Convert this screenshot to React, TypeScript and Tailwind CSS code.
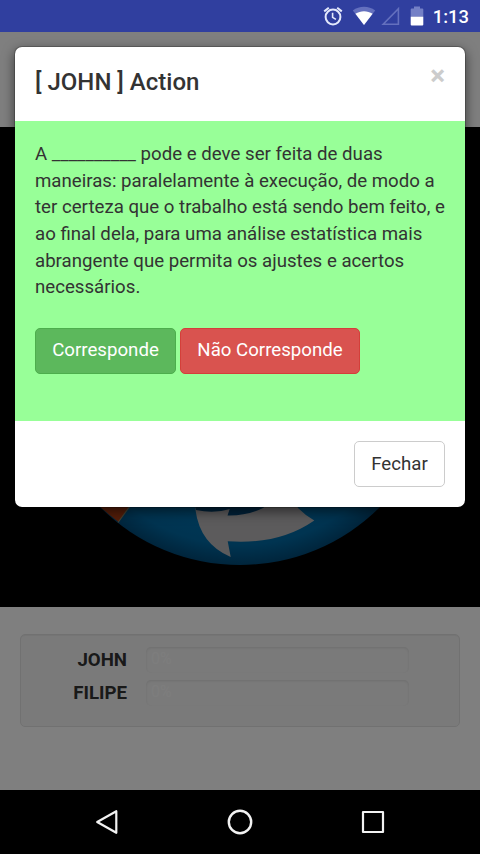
import { useState } from 'react';

const players = [
  { id: 1, name: 'JOHN', score: 0 },
  { id: 2, name: 'FILIPE', score: 0 },
];

const question =
  'A __________ pode e deve ser feita de duas maneiras: paralelamente à execução, de modo a ter certeza que o trabalho está sendo bem feito, e ao final dela, para uma análise estatística mais abrangente que permita os ajustes e acertos necessários.';

function StatusBar() {
  return (
    <header className="flex h-8 shrink-0 items-center justify-end bg-[#303f9f] pr-[11px] text-white">
      <svg width="20" height="20" viewBox="0 0 20 20" fill="none" stroke="#e3e8fb" className="mr-[9px]">
        <circle cx="10" cy="11" r="7.4" strokeWidth="2" />
        <path d="M1.2 5.4L5.8 1.7M18.8 5.4L14.2 1.7" strokeWidth="2" />
        <path d="M9.6 6.8v4.6l3.3 2" strokeWidth="1.6" />
      </svg>
      <svg width="24" height="20" viewBox="0 0 24 20" className="mr-[5px]">
        <path d="M.8 4.5C4 2.1 8 .8 12 .8s8 1.3 11.2 3.7L12 18.9z" fill="#6470be" />
        <path d="M3.4 7.8C6 6 9 5.2 12 5.2s6 .8 8.6 2.6L12 18.9z" fill="#fff" />
      </svg>
      <svg width="19" height="20" viewBox="0 0 19 20" fill="none" className="mr-[10px]">
        <path d="M2.2 18.2H17.4V2.6z" stroke="#6470be" strokeWidth="1.6" />
      </svg>
      <svg width="14" height="20" viewBox="0 0 14 20" className="mr-[9px]">
        <path d="M.7 10V3.4Q.7 2.4 1.7 2.4H4V.4H10V2.4H12.3Q13.3 2.4 13.3 3.4V10z" fill="#7480c6" />
        <path d="M.7 10.4H13.3V18.6Q13.3 19.6 12.3 19.6H1.7Q.7 19.6 .7 18.6z" fill="#fff" />
      </svg>
      <span className="pt-px text-[18.4px] leading-8 font-medium">1:13</span>
    </header>
  );
}

function Wheel() {
  return (
    <svg viewBox="0 0 480 480" className="block h-[480px] w-full">
      <defs>
        <radialGradient id="blue" gradientUnits="userSpaceOnUse" cx="240" cy="240" r="198">
          <stop offset="0.7" stopColor="#0072b0" />
          <stop offset="0.9" stopColor="#0068a2" />
          <stop offset="1" stopColor="#004a78" />
        </radialGradient>
      </defs>
      <circle cx="240" cy="240" r="198" fill="url(#blue)" />
      <path d="M98 378L130 378L118.5 395Q108 387 98 378z" fill="#a83a12" />
      <path d="M130 379L118 395.5" stroke="#8a8160" strokeWidth="1.2" />
      <path
        d="M195 360H290L298 381Q306 389 314.3 393.5Q279 418 227.7 414.3L230.7 430Q200 417 195.5 383z"
        fill="#b9b7b8"
      />
      <path d="M190 360H236L230 382Q214 387 196 383z" fill="#004272" />
      <path d="M236 360H290L263 381Q247 389 227.5 388.5L231 378z" fill="#004272" />
    </svg>
  );
}

function ScoreBoard() {
  return (
    <div className="mx-5 mt-[27px] h-[93px] rounded-[5px] border border-[#e3e3e3] bg-[#f5f5f5] pt-3 shadow-[inset_0_1px_1px_rgba(0,0,0,0.05)]">
      {players.map(p => (
        <div key={p.id} className="mb-[7px] flex h-[26px] items-center">
          <span className="w-[106px] text-right text-[18.67px] leading-[26px] font-bold text-[#333]">{p.name}</span>
          <div className="ml-[19px] h-[26px] w-[263px] overflow-hidden rounded-[5px] bg-[#f5f5f5] pl-[5px] text-[16px] leading-6 text-white/60 shadow-[inset_0_1px_3px_rgba(0,0,0,0.1)]">
            {p.score}%
          </div>
        </div>
      ))}
    </div>
  );
}

function ActionModal({ onClose }: { onClose: () => void }) {
  return (
    <div className="absolute inset-0 bg-black/50 px-[14px] pt-[14px]">
      <div className="flex h-[462px] flex-col overflow-hidden rounded-[8px] border border-black/20 bg-white bg-clip-padding text-[#333] shadow-[0_4px_12px_rgba(0,0,0,0.5)]">
        <div className="flex h-[74px] shrink-0 justify-between px-5">
          <h4 className="pt-[18px] text-[24px] leading-[34px] font-medium">[ JOHN ] Action</h4>
          <button className="mt-[15px] h-[28px] text-[28px] leading-[28px] font-bold text-[#ccc]" onClick={onClose}>
            ×
          </button>
        </div>
        <div className="h-[300px] shrink-0 bg-[#98ff98] px-5 pt-5 text-[18.67px] leading-[26.67px]">
          <p>{question}</p>
          <div className="mt-[27px] flex gap-1 text-white">
            <button className="h-[46px] w-[141px] rounded-[5px] border border-[#4cae4c] bg-[#5cb85c] pb-px">
              Corresponde
            </button>
            <button className="h-[46px] w-[180px] rounded-[5px] border border-[#d43f3a] bg-[#d9534f] pb-px">
              Não Corresponde
            </button>
          </div>
        </div>
        <div className="flex justify-end px-5 pt-5 text-[18.67px]">
          <button className="h-[46px] w-[91px] rounded-[5px] border border-[#ccc] bg-white" onClick={onClose}>
            Fechar
          </button>
        </div>
      </div>
    </div>
  );
}

function NavBar() {
  return (
    <nav className="flex h-16 shrink-0 items-center justify-between bg-black px-[94px]">
      <svg width="26" height="28" viewBox="0 0 26 28" fill="none" stroke="#f2f2f2" strokeWidth="2.2" strokeLinejoin="round">
        <path d="M22.3 3.2V24.8L3.2 14z" />
      </svg>
      <svg width="28" height="28" viewBox="0 0 28 28" fill="none" stroke="#f2f2f2" strokeWidth="2.4">
        <circle cx="14" cy="14" r="11.2" />
      </svg>
      <svg width="26" height="28" viewBox="0 0 26 28" fill="none" stroke="#f2f2f2" strokeWidth="2.2" strokeLinejoin="round">
        <path d="M3 4H23V24H3z" />
      </svg>
    </nav>
  );
}

export default function App() {
  const [open, setOpen] = useState(true);

  return (
    <div className="flex h-[854px] w-[480px] flex-col overflow-hidden bg-white font-[Roboto,sans-serif]">
      <StatusBar />
      <main className="relative flex-1 overflow-hidden">
        <div className="mt-[95px] bg-black">
          <Wheel />
        </div>
        <ScoreBoard />
        {open && <ActionModal onClose={() => setOpen(false)} />}
      </main>
      <NavBar />
    </div>
  );
}
